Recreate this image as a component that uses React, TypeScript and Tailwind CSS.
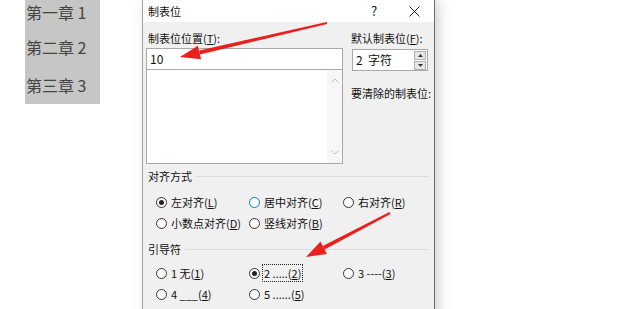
import React from 'react';

const font = { fontFamily: '"Noto Sans CJK SC", "Noto Sans", sans-serif' };

interface RadioProps {
  label: React.ReactNode;
  checked?: boolean;
  hover?: boolean;
  focus?: boolean;
}

const Radio: React.FC<RadioProps> = ({ label, checked, hover, focus }) => (
  <div className="flex items-center h-[16px] whitespace-nowrap">
    <span
      className={`w-[11px] h-[11px] rounded-full bg-white border flex items-center justify-center shrink-0 ${
        hover ? 'border-[#0078d7]' : 'border-[#333]'
      }`}
    >
      {checked && <span className="w-[5px] h-[5px] rounded-full bg-[#222]" />}
    </span>
    <span className={`ml-[3px] px-px leading-[16px] ${focus ? 'outline-1 outline-dotted outline-[#222]' : ''}`}>
      {label}
    </span>
  </div>
);

const Section: React.FC<{ title: string }> = ({ title }) => (
  <div className="flex items-center h-[16px] pl-[2px] pr-[5px]">
    <span className="leading-[16px]">{title}</span>
    <div className="flex-1 ml-[4px] border-t border-[#dcdcdc]" />
  </div>
);

export default function App() {
  return (
    <div className="relative w-[620px] h-[309px] overflow-hidden bg-white flex items-start text-[11px] text-[#111]" style={font}>
      {/* document text */}
      <div className="ml-[25px] w-[75px] h-[104px] bg-[#c6c6c6] flex flex-col pl-px text-[16px] leading-[20px] text-[#444]">
        <span className="mt-[2px]">第一章 1</span>
        <span className="mt-[15px]">第二章 2</span>
        <span className="mt-[18px]">第三章 3</span>
      </div>

      {/* dialog */}
      <div className="ml-[42px] w-[293px] h-[330px] bg-[#f0f0f0] border-l border-r border-l-[#a0a0a0] border-r-[#6e6e6e] shadow-[4px_0_12px_rgba(0,0,0,0.18)] flex flex-col">
        <div className="h-[22px] bg-white flex items-center">
          <span className="pl-[5px]">制表位</span>
          <div className="ml-auto flex">
            <span className="w-[40px] text-center text-[13px]">?</span>
            <span className="w-[40px] flex items-center justify-center">
              <svg width="11" height="11" viewBox="0 0 11 11">
                <path d="M0.5 0.5 L10.5 10.5 M10.5 0.5 L0.5 10.5" stroke="#222" strokeWidth="1" />
              </svg>
            </span>
          </div>
        </div>

        <div className="flex flex-col pl-[3px]">
          <div className="flex pt-[8px]">
            <div className="w-[197px] flex flex-col">
              <span className="leading-[16px] pl-[2px]">
                制表位位置(<u>T</u>):
              </span>
              <div className="mt-[2px] h-[22px] bg-white border border-[#a8a8a8] flex items-center pl-[3px] text-[12px]">10</div>
              <div className="h-[94px] bg-white border border-t-0 border-[#a8a8a8] flex justify-end">
                <div className="w-[15px] bg-[#f7f7f7] flex flex-col items-center justify-between py-[8px]">
                  <svg width="8" height="5" viewBox="0 0 8 5">
                    <path d="M0.5 4.5 L4 1 L7.5 4.5" stroke="#bdbdbd" fill="none" />
                  </svg>
                  <svg width="8" height="5" viewBox="0 0 8 5">
                    <path d="M0.5 0.5 L4 4 L7.5 0.5" stroke="#bdbdbd" fill="none" />
                  </svg>
                </div>
              </div>
            </div>
            <div className="ml-[8px] flex flex-col whitespace-nowrap">
              <span className="leading-[16px]">
                默认制表位(<u>F</u>):
              </span>
              <div className="mt-[3px] ml-px w-[76px] h-[22px] bg-white border border-[#a8a8a8] flex items-center pl-[3px] text-[12px]">
                <span className="whitespace-pre">2  字符</span>
                <div className="ml-auto mr-px flex flex-col gap-px">
                  <div className="w-[12px] h-[9px] bg-[#e6e6e6] border border-[#b0b0b0] flex items-center justify-center">
                    <svg width="5" height="3" viewBox="0 0 5 3"><path d="M0 3 L2.5 0 L5 3 Z" fill="#333" /></svg>
                  </div>
                  <div className="w-[12px] h-[9px] bg-[#e6e6e6] border border-[#b0b0b0] flex items-center justify-center">
                    <svg width="5" height="3" viewBox="0 0 5 3"><path d="M0 0 L2.5 3 L5 0 Z" fill="#333" /></svg>
                  </div>
                </div>
              </div>
              <span className="mt-[14px] leading-[16px]">要清除的制表位:</span>
            </div>
          </div>

          <div className="mt-[4px]">
            <Section title="对齐方式" />
          </div>
          <div className="mt-[10px] pl-[10px] grid grid-cols-[93px_94px_auto] gap-y-[5px]">
            <Radio checked label={<>左对齐(<u>L</u>)</>} />
            <Radio hover label={<>居中对齐(<u>C</u>)</>} />
            <Radio label={<>右对齐(<u>R</u>)</>} />
            <Radio label={<>小数点对齐(<u>D</u>)</>} />
            <Radio label={<>竖线对齐(<u>B</u>)</>} />
          </div>

          <div className="mt-[10px]">
            <Section title="引导符" />
          </div>
          <div className="mt-[8px] pl-[10px] grid grid-cols-[93px_94px_auto] gap-y-[5px]">
            <Radio label={<>1 无(<u>1</u>)</>} />
            <Radio checked focus label={<>2 .....(<u>2</u>)</>} />
            <Radio label={<>3 ----(<u>3</u>)</>} />
            <Radio label={<>4 ___(<u>4</u>)</>} />
            <Radio label={<>5 ......(<u>5</u>)</>} />
          </div>
        </div>
      </div>

      {/* red annotation arrows */}
      <svg className="absolute inset-0 pointer-events-none" width="620" height="309" viewBox="0 0 620 309">
        <polygon points="327.2,24 326.8,22 199.05,50.6 199.95,54.4" fill="#e8201e" />
        <polygon points="180,57 201.1,59.3 197.9,45.7" fill="#e8201e" />
        <polygon points="390.5,213.9 389.5,212.1 322.8,245.9 324.6,249.5" fill="#e8201e" />
        <polygon points="306,257 326.9,253.9 320.5,241.5" fill="#e8201e" />
      </svg>
    </div>
  );
}
